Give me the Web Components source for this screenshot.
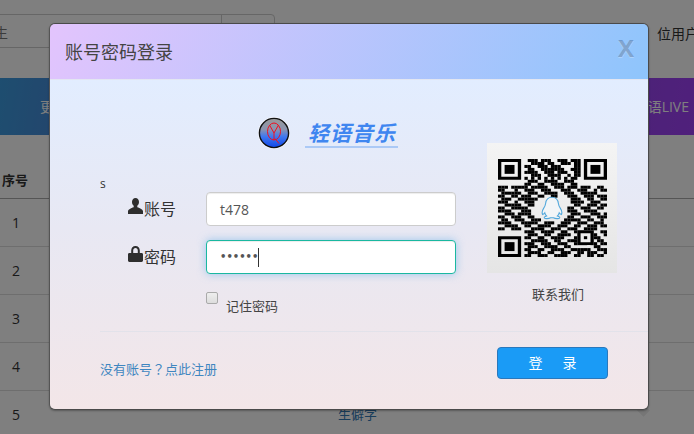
<!DOCTYPE html>
<html lang="zh">
<head>
<meta charset="utf-8">
<title>账号密码登录</title>
<style>
  html, body { margin: 0; height: 100%; overflow: hidden; background: #fff; }
  body { font-family: "Open Sans", "Noto Sans CJK SC", sans-serif; color: #333; }
</style>
</head>
<body>
<back-page></back-page>
<login-modal></login-modal>

<script>
const CJK = '"Open Sans", "Noto Sans CJK SC", sans-serif';

// 背景页面：搜索框、彩条、表格
class BackPage extends HTMLElement {
  constructor() {
    super();
    this.attachShadow({ mode: 'open' });
    const rows = ['1', '2', '3', '4', '5'].map((n, i) => `
      <div class="row">
        <span class="num">${n}</span>
        ${i === 4 ? '<a>生僻字</a>' : ''}
        <i class="pin"></i>
      </div>`).join('');
    this.shadowRoot.innerHTML = `
      <style>
        :host { display: block; width: 694px; height: 434px; overflow: hidden; position: relative; font: 14px ${CJK}; color: #333; }
        .top { display: flex; height: 78px; box-sizing: border-box; padding-top: 14px; justify-content: space-between; }
        .search { display: flex; height: 34px; width: 296px; margin-left: -21px; box-sizing: border-box; border: 1px solid #ccc; border-radius: 4px; }
        .search span { flex: 1; padding: 8px 0 0 14px; color: #777; line-height: 20px; }
        .search i { width: 52px; border-left: 1px solid #ccc; }
        .users { width: 37px; white-space: nowrap; overflow: hidden; line-height: 40px; }
        .bar { height: 55px; display: flex; justify-content: space-between; align-items: center; color: #fff; padding: 0 5px 2px 40px; background: linear-gradient(100deg, #3c9ce0 0%, #5a6fd0 25%, #8b50e0 70%, #a040f8 100%); }
        .thead { height: 64px; box-sizing: border-box; padding: 35px 0 0 2px; border-bottom: 1px solid #aaa; font-weight: 700; line-height: 20px; font-size: 13px; }
        .row { height: 48px; box-sizing: border-box; border-bottom: 1px solid #ddd; position: relative; display: flex; align-items: center; }
        .num { width: 338px; padding-left: 12px; box-sizing: border-box; }
        .row:last-child { border: 0; }
        a { color: #337ab7; font-size: 13px; margin-top: -2px; }
        .pin { position: absolute; left: 639px; top: 15px; width: 9px; height: 9px; background: #ececec; transform: rotate(45deg); }
        .dim { position: absolute; inset: 0; background: rgba(0, 0, 0, .5); }
      </style>
      <div class="top">
        <div class="search"><span>生</span><i></i></div>
        <div class="users">位用户</div>
      </div>
      <div class="bar"><span>更</span><span>语LIVE</span></div>
      <div class="thead">序号</div>
      ${rows}
      <div class="dim"></div>
    `;
  }
}

// 站点标志：圆形按钮图标加站名
class AppLogo extends HTMLElement {
  constructor() {
    super();
    this.attachShadow({ mode: 'open' });
    this.shadowRoot.innerHTML = `
      <style>
        :host { display: flex; align-items: center; height: 32px; }
        svg { display: block; margin-right: 15px; }
        b { font: italic 700 21px/27px "Noto Sans CJK SC", sans-serif; color: #3f86f0; letter-spacing: 1px; border-bottom: 2px solid #abc9f6; padding: 0 0 0 3px; margin-top: 1px; width: 90px; white-space: nowrap; }
      </style>
      <svg width="32" height="32" viewBox="0 0 32 32">
        <defs>
          <linearGradient id="ball" x1="0" y1="0" x2="0" y2="1">
            <stop offset="0" stop-color="#999"/>
            <stop offset=".38" stop-color="#8a94b0"/>
            <stop offset=".62" stop-color="#3f78f0"/>
            <stop offset="1" stop-color="#1046e8"/>
          </linearGradient>
        </defs>
        <circle cx="16" cy="16" r="16" fill="#f6f8ff"/>
        <circle cx="16" cy="16" r="14.6" fill="url(#ball)" stroke="#111" stroke-width="1.4"/>
        <g fill="none" stroke="#f01020" stroke-width="1">
          <ellipse cx="16" cy="14.5" rx="6.5" ry="8.5"/>
          <path d="M11.5 8 16 16V23M20.5 8 16 16M17 21.5 21 26.5"/>
        </g>
      </svg>
      <b>轻语音乐</b>
    `;
  }
}

// 二维码图片
class QrCode extends HTMLElement {
  constructor() {
    super();
    this.attachShadow({ mode: 'open' });
    const data = [
      '000000000111011100111011100000000',
      '000000000011110110011101100000000',
      '000000001100111011100001100000000',
      '000000000110011111110011100000000',
      '000000001111001110111001100000000',
      '000000000011100111100101100000000',
      '000000001010101010101011000000000',
      '000000000111001111001110000000000',
      '000000001100110011110011000000000',
      '111011111011111001110111011100110',
      '110001001110011100011100111001011',
      '011111100111001111001110011111000',
      '110011011100110011000111001110111',
      '011100111111000000000011100110011',
      '111001001110000000000011110011100',
      '001111100110000000000001100111011',
      '110011111000000000000110011100110',
      '111100011100000000000111001111000',
      '001110111100000000000011100011101',
      '110011100110000000000110011100111',
      '011001110011100000001111100110010',
      '111100011111001110011100111001110',
      '001111001100111100111001100111011',
      '110011100011110011100111001111000',
      '000000001110011110011001111110011',
      '000000000111001100111100000011001',
      '000000001100110011110001111011100',
      '000000000011111001100111111100110',
      '000000001110011100111001111011011',
      '000000000111001111001100000001100',
      '000000001100110011110011111100111',
      '000000000111100110011100110111001',
      '000000001100111001111001100110110'
    ];
    let cells = '';
    data.forEach((row, y) => {
      [...row].forEach((c, x) => {
        if (c === '1') cells += `<rect x="${x}" y="${y}" width="1.02" height="1.02"/>`;
      });
    });
    const finder = (x, y) => `<path fill-rule="evenodd" d="M${x} ${y}h7v7h-7zM${x + 1} ${y + 1}v5h5v-5z"/><rect x="${x + 2}" y="${y + 2}" width="3" height="3"/>`;
    const align = `<rect x="24" y="24" width="5" height="5" fill="#eee"/><path fill-rule="evenodd" d="M24 24h5v5h-5zM25 25v3h3v-3z"/><rect x="26" y="26" width="1" height="1"/>`;
    this.shadowRoot.innerHTML = `
      <style>
        :host { display: block; position: relative; width: 130px; height: 130px; background: linear-gradient(180deg, #f4f4f4, #e5e5e5); }
        .code { position: absolute; left: 11px; top: 16px; width: 109px; height: 98px; filter: blur(.5px); }
        .qq { position: absolute; left: 54px; top: 53px; }
      </style>
      <svg class="code" viewBox="0 0 33 33" preserveAspectRatio="none">
        <g>${cells}${finder(0, 0)}${finder(26, 0)}${finder(0, 26)}${align}</g>
      </svg>
      <svg class="qq" width="22" height="24" viewBox="0 0 22 24">
        <path d="M11 1.2C7 1.2 5 4 4.6 7.5 4.4 9.6 3.8 10.6 2.6 12.4 1.2 14.6 .8 17 1.6 18.6 2.4 18.2 3.2 17.6 3.8 16.8 4.2 18.2 4.8 19.2 5.6 20 3.8 20.6 3 21.2 3.4 22 4 23 7.6 22.8 9.6 21.8H12.4C14.4 22.8 18 23 18.6 22 19 21.2 18.2 20.6 16.4 20 17.2 19.2 17.8 18.2 18.2 16.8 18.8 17.6 19.6 18.2 20.4 18.6 21.2 17 20.8 14.6 19.4 12.4 18.2 10.6 17.6 9.6 17.4 7.5 17 4 15 1.2 11 1.2Z" fill="#f2f5f7" stroke="#52a8dc" stroke-width="1.1"/>
      </svg>
    `;
  }
}

// 表单行：图标 + 标签 + 输入框
class LoginField extends HTMLElement {
  constructor() {
    super();
    this.attachShadow({ mode: 'open' });
  }

  connectedCallback() {
    const icon = this.getAttribute('icon');
    const focused = this.hasAttribute('focused');
    const icons = {
      user: '<path d="M7.5 0C5.3 0 4 1.8 4 4c0 1.6.7 3 1.7 3.8v1.4C3 10 0 11.3 0 13.6V16h15v-2.4c0-2.3-3-3.6-5.7-4.4V7.8C10.3 7 11 5.6 11 4c0-2.2-1.3-4-3.5-4z"/>',
      lock: '<path fill-rule="evenodd" d="M7.5 0C4.9 0 3.2 1.9 3.2 4.4V7H1.4C.6 7 0 7.6 0 8.4v6.2C0 15.4.6 16 1.4 16h12.2c.8 0 1.4-.6 1.4-1.4V8.4c0-.8-.6-1.4-1.4-1.4h-1.8V4.4C11.8 1.9 10.1 0 7.5 0zM5.2 7V4.5c0-1.4.9-2.6 2.3-2.6s2.3 1.2 2.3 2.6V7z"/>'
    };
    this.shadowRoot.innerHTML = `
      <style>
        :host { display: flex; align-items: center; height: 34px; padding-left: 28px; color: #333; font: 16px ${CJK}; }
        .label { display: flex; align-items: center; width: 78px; }
        .label span { margin-top: -3px; }
        svg { display: block; width: 15px; height: 16px; margin: -6px 1px 0 0; fill: #2e2e2e; }
        .box { width: 250px; height: 34px; box-sizing: border-box; border: 1px solid #ccc; border-radius: 4px; background: #fff; padding: 0 13px; display: flex; align-items: center; font-size: 14px; color: #555; box-shadow: inset 0 1px 1px rgba(0,0,0,.075); }
        :host([focused]) .box { border-color: #1ab8a0; box-shadow: inset 0 1px 1px rgba(0,0,0,.075), 0 0 8px rgba(102,175,233,.6); }
        .dots { font: 700 10px/16px "DejaVu Sans", sans-serif; color: #555; white-space: nowrap; }
        .caret { width: 1px; height: 19px; background: #333; }
      </style>
      <div class="label"><svg viewBox="0 0 15 16">${icons[icon]}</svg><span>${this.getAttribute('label')}</span></div>
      <div class="box">
        ${focused ? `<span class="dots">${'•'.repeat(6)}</span><span class="caret"></span>` : `<span>${this.getAttribute('value')}</span>`}
      </div>
    `;
  }
}

// 登录弹窗
class LoginModal extends HTMLElement {
  constructor() {
    super();
    this.attachShadow({ mode: 'open' });
    this.shadowRoot.innerHTML = `
      <style>
        :host { display: flex; flex-direction: column; position: absolute; left: 49px; top: 23px; width: 600px; height: 387px; box-sizing: border-box; border: 1px solid #4a4a4a; border-left-color: #555; border-radius: 6px; overflow: hidden; font: 13px ${CJK}; color: #333; box-shadow: 0 1px 2px rgba(0,0,0,.3); }
        header { display: flex; justify-content: space-between; align-items: center; height: 55px; flex: none; padding: 0 14px 0 15px; background: linear-gradient(118deg, #e3c4fd 0%, #8ec5fc 100%); border-bottom: 1px solid #e2e6f2; box-sizing: content-box; }
        h4 { margin: 0; font: 400 18px/26px ${CJK}; color: #444; }
        .close { font: 700 24px/24px "Open Sans", sans-serif; color: rgba(20,50,90,.28); text-shadow: 0 1px 0 rgba(255,255,255,.25); margin: -8px 0 0; }
        .body { flex: 1; display: flex; flex-direction: column; background: linear-gradient(180deg, #e2edff 0%, #e8e8f3 45%, #f3e6e8 100%); }
        .main { display: flex; height: 251px; flex: none; }
        .form { width: 437px; flex: none; box-sizing: border-box; padding: 37px 0 0 50px; }
        app-logo { margin-left: 158px; }
        .s { height: 16px; margin-top: 27px; line-height: 16px; font-size: 12px; color: #333; }
        login-field + login-field { margin-top: 14px; }
        .remember { display: flex; align-items: flex-start; margin: 18px 0 0 106px; color: #444; }
        .check { width: 10px; height: 10px; border: 1px solid #aaa; border-radius: 2px; background: linear-gradient(#eee, #ddd); margin-right: 8px; }
        .remember span { margin-top: 6px; line-height: 16px; }
        .contact { width: 130px; margin-top: 63px; text-align: center; }
        .contact p { margin: 13px 0 0; padding-left: 12px; line-height: 16px; color: #444; }
        footer { margin-left: 50px; border-top: 1px solid #e2e2ea; display: flex; justify-content: space-between; align-items: flex-start; padding: 15px 40px 0 0; }
        a { color: #3f86c0; line-height: 16px; margin-top: 14px; }
        a span { font-family: "Noto Sans CJK TC", sans-serif; }
        button { width: 111px; height: 32px; box-sizing: border-box; border: 1px solid #2a78bc; border-radius: 4px; background: #1a9bf6; color: #fff; font: 14px ${CJK}; padding: 0 0 2px; white-space: pre; word-spacing: .4px; }
      </style>
      <header><h4>账号密码登录</h4><span class="close">X</span></header>
      <div class="body">
        <div class="main">
          <div class="form">
            <app-logo></app-logo>
            <div class="s">s</div>
            <login-field icon="user" label="账号" value="t478"></login-field>
            <login-field icon="lock" label="密码" focused></login-field>
            <div class="remember"><i class="check"></i><span>记住密码</span></div>
          </div>
          <div class="contact">
            <qr-code></qr-code>
            <p>联系我们</p>
          </div>
        </div>
        <footer>
          <a>没有账号<span lang="zh-Hant">？</span>点此注册</a>
          <button>登     录</button>
        </footer>
      </div>
    `;
  }
}

customElements.define('back-page', BackPage);
customElements.define('app-logo', AppLogo);
customElements.define('qr-code', QrCode);
customElements.define('login-field', LoginField);
customElements.define('login-modal', LoginModal);
</script>
</body>
</html>
